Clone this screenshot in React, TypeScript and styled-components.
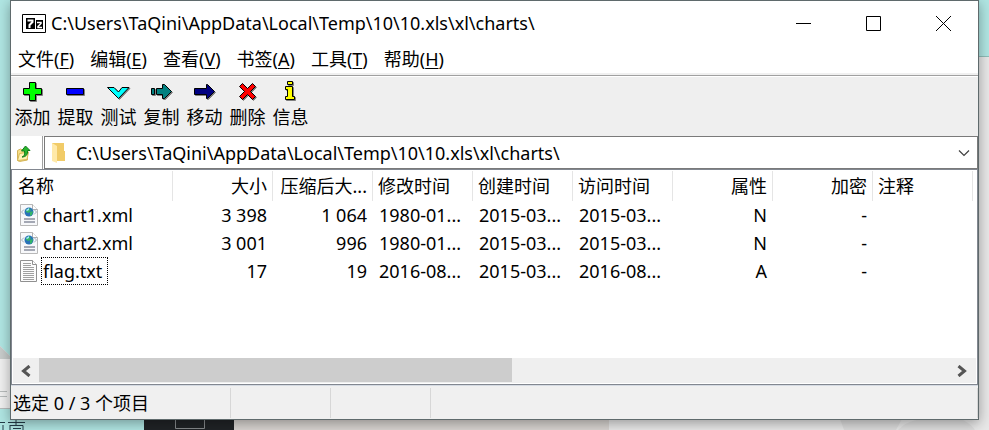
import React from "react";
import styled, { createGlobalStyle } from "styled-components";

const GlobalStyle = createGlobalStyle`
  *, *::before, *::after { box-sizing: border-box; }
  body {
    margin: 0;
    font-family: "Noto Sans", "Noto Sans CJK SC", sans-serif;
    font-size: 18px;
    line-height: 24px;
    color: #000;
    background: #a8dcd8;
  }
  button, input { font: inherit; color: inherit; margin: 0; padding: 0; border: 0; background: none; }
  svg { display: block; }
`;

const Desktop = styled.div`
  position: relative;
  display: flex;
  min-height: 100vh;
  padding: 0 10px 10px;
  overflow: hidden;
`;

const Wallpaper = styled.svg`
  position: absolute;
  inset: 0;
  width: 100%;
  height: 100%;
`;

const Window = styled.main`
  position: relative;
  display: flex;
  flex: 1;
  min-width: 0;
  flex-direction: column;
  border: 1px solid #5f6a6c;
  background: #fff;
  box-shadow: 0 3px 12px rgba(0, 0, 0, 0.35);
`;

const TitleBar = styled.header`
  display: flex;
  align-items: center;
  height: 44px;
  padding-left: 11px;
`;

const Title = styled.h1`
  flex: 1;
  min-width: 0;
  margin: 0 0 0 5px;
  overflow: hidden;
  font-size: 18px;
  font-weight: 400;
  white-space: nowrap;
`;

const CaptionButton = styled.button`
  display: grid;
  place-items: center;
  width: 70px;
  height: 44px;
`;

const MenuBar = styled.nav`
  display: flex;
  align-items: center;
  gap: 2px;
  height: 28px;
`;

const MenuItem = styled.button`
  padding: 0 7px;
  white-space: nowrap;
  u { text-underline-offset: 2px; text-decoration-thickness: 1px; }
`;

const Toolbar = styled.div`
  display: flex;
  height: 63px;
  padding-top: 5px;
  border-top: 2px solid #f0f0f0;
  background: #efefef;
  box-shadow: inset 0 1px #a0a0a0, inset 0 2px #fff;
`;

const ToolButton = styled.button`
  display: flex;
  flex-direction: column;
  align-items: center;
  gap: 1px;
  width: 43px;
  white-space: nowrap;
`;

const AddressRow = styled.div`
  display: flex;
  height: 33px;
`;

const UpButton = styled.button`
  display: flex;
  align-items: center;
  width: 32px;
  padding-left: 5px;
  border-right: 1px solid #a0a0a0;
`;

const AddressBox = styled.div`
  display: flex;
  flex: 1;
  align-items: center;
  min-width: 0;
  margin-left: 1px;
  padding-left: 6px;
  border: 1px solid #7a7a7a;
`;

const AddressInput = styled.input`
  flex: 1;
  min-width: 0;
  height: 28px;
  margin-left: 10px;
  outline: 0;
`;

const DropButton = styled.button`
  display: grid;
  place-items: center;
  width: 26px;
  height: 30px;
`;

const ListPanel = styled.section`
  display: flex;
  flex: 1;
  flex-direction: column;
  min-width: 0;
  padding: 1px;
  border: 1px solid #828790;
`;

const TableArea = styled.div`
  flex: 1;
  overflow: hidden;
`;

const FileTable = styled.table`
  width: 960px;
  table-layout: fixed;
  border-collapse: separate;
  border-spacing: 0;
`;

const Column = styled.col<{ $wide?: boolean }>`
  width: ${(p) => (p.$wide ? 160 : 100)}px;
`;

const HeadCell = styled.th<{ $right?: boolean }>`
  height: 30px;
  padding: 0 5px;
  border-right: 1px solid #e5e5e5;
  font-weight: 400;
  text-align: ${(p) => (p.$right ? "right" : "left")};
  white-space: nowrap;
`;

const Cell = styled.td<{ $right?: boolean }>`
  height: 28px;
  padding: 0 6px;
  text-align: ${(p) => (p.$right ? "right" : "left")};
  white-space: nowrap;
`;

const FileName = styled.div`
  display: flex;
  align-items: center;
  gap: 2px;
`;

const NameText = styled.span<{ $focused?: boolean }>`
  height: 28px;
  padding: 1px ${(p) => (p.$focused ? 5 : 1)}px 1px 1px;
  border: 1px dotted ${(p) => (p.$focused ? "#000" : "transparent")};
`;

const ScrollBar = styled.div`
  display: flex;
  height: 25px;
  padding-right: 1px;
  background: #efefef;
`;

const ScrollButton = styled.button`
  display: grid;
  place-items: center;
  width: 26px;
`;

const ScrollTrack = styled.div`
  flex: 1;
`;

const ScrollThumb = styled.div`
  width: 52%;
  height: 24px;
  background: #cdcdcd;
`;

const StatusBar = styled.footer`
  display: flex;
  height: 34px;
  padding: 2px 0 1px;
  border-top: 1px solid #d5dbe3;
  background: #f0f0f0;
`;

const StatusPart = styled.div<{ $width?: number }>`
  display: flex;
  flex: ${(p) => (p.$width ? `0 0 ${p.$width}px` : "1")};
  align-items: center;
  padding-left: 2px;
  border-right: 1px solid #d7d7d7;
  white-space: nowrap;
`;

function Shaded({ d, fill }: { d: string; fill: string }) {
  return (
    <svg width="25" height="24" viewBox="0 0 25 24" aria-hidden="true">
      <path d={d} fill="#808080" stroke="#808080" transform="translate(1 1)" />
      <path d={d} fill={fill} stroke="#000" />
    </svg>
  );
}

const tools = [
  { label: "添加", fill: "#00ff00", d: "M9.5 2.5h6v6h6v6h-6v6h-6v-6h-6v-6h6z" },
  { label: "提取", fill: "#0000ff", d: "M3.5 8.5h17v6h-17z" },
  { label: "测试", fill: "#00ffff", d: "M1.5 7.5h6.5l4.5 4.5 3.5-4.5h7L12.5 18.5z" },
  { label: "复制", fill: "#008080", d: "M2.5 8.5h3v6h-3zM7.5 8.5h6v-4h2l7 7-7 7h-2v-4h-6z" },
  { label: "移动", fill: "#000080", d: "M2.5 8.5h12v-4h1l7 7-7 7h-1v-4h-12z" },
  { label: "删除", fill: "#ff0000", d: "M7.5 3.5l5 5 5-5 3 3-5 5 5 5-3 3-5-5-5 5-3-3 5-5-5-5z" },
  { label: "信息", fill: "#ffff00", d: "M9.5 1.5h5v3h-5zM7.5 6.5h7v10h2v3h-9v-3h2v-7h-2z" },
];

const menus = [
  ["文件", "F"],
  ["编辑", "E"],
  ["查看", "V"],
  ["书签", "A"],
  ["工具", "T"],
  ["帮助", "H"],
];

const columns = [
  { title: "名称" },
  { title: "大小", right: true },
  { title: "压缩后大...", right: true },
  { title: "修改时间" },
  { title: "创建时间" },
  { title: "访问时间" },
  { title: "属性", right: true },
  { title: "加密", right: true },
  { title: "注释" },
];

const files = [
  ["chart1.xml", "3 398", "1 064", "1980-01...", "2015-03...", "2015-03...", "N", "-", ""],
  ["chart2.xml", "3 001", "996", "1980-01...", "2015-03...", "2015-03...", "N", "-", ""],
  ["flag.txt", "17", "19", "2016-08...", "2015-03...", "2016-08...", "A", "-", ""],
];

const path = "C:\\Users\\TaQini\\AppData\\Local\\Temp\\10\\10.xls\\xl\\charts\\";

function AppIcon() {
  return (
    <svg width="24" height="19" viewBox="0 0 24 19" aria-hidden="true">
      <path d="M.5.5h23v18H.5z" fill="#fff" stroke="#000" />
      <path d="M4 4h9v11H4zM14 6h7v9h-7z" fill="#000" />
      <path d="M5.5 6.5h5V8l-3 3v3" fill="none" stroke="#fff" strokeWidth="2" />
      <path d="M15 8.5h4v1l-3 3v1h4" fill="none" stroke="#fff" strokeWidth="1.5" />
    </svg>
  );
}

function XmlIcon() {
  return (
    <svg width="20" height="24" viewBox="0 0 20 24" aria-hidden="true">
      <path d="M1.5 1.5h12l5 5v16h-17z" fill="#f7f8fa" stroke="#b8b8b8" />
      <path d="M13.5 1.5v5h5" fill="#fff" stroke="#b0b0b0" />
      <path d="M5 6.5L2.5 9 5 11.5M15 6.5L17.5 9 15 11.5" fill="none" stroke="#9fb0c0" />
      <circle cx="10" cy="9" r="4.5" fill="#2872b8" />
      <path d="M7 7l3-2 2 2-2 3-3-1zM11 9l3-1-1 4-2 1z" fill="#35b567" />
      <path d="M7 7l3-2v2l-2 1z" fill="#a5e6ff" />
      <path d="M5 16h11M5 19h11" stroke="#a4a8b4" strokeWidth="2" />
    </svg>
  );
}

function TextIcon() {
  return (
    <svg width="20" height="24" viewBox="-1 0 20 24" aria-hidden="true">
      <path d="M.5 1.5h12l4 4v17H.5z" fill="#fcfcfc" stroke="#909090" />
      <path d="M12.5 1.5v4h4" fill="#fff" stroke="#909090" />
      <path
        d="M3 4.5h8M3 6.5h8M3 8.5h11M3 10.5h11M3 12.5h11M3 14.5h11M3 16.5h11M3 18.5h11M3 20.5h11"
        stroke="#a0a0a0"
      />
    </svg>
  );
}

function UpFolderIcon() {
  return (
    <svg width="17" height="18" viewBox="0 0 17 18" aria-hidden="true">
      <path d="M1.5 6.5l3-1.5 2 1 5 1v9l-8 1.5-2-1z" fill="#f8df86" stroke="#d3b45a" />
      <path d="M1.5 16.5l2-7 9-1.5-1.5 7.5z" fill="#fff3b4" stroke="#d8b855" />
      <path d="M6 13c2.500-.5 3-3 2.500-6H5.500L9.500 2l4.500 4.500h-2.500c.5 4-1.500 6.500-5.500 6.500z" fill="#28b52c" stroke="#117b19" />
    </svg>
  );
}

function FolderIcon() {
  return (
    <svg width="15" height="22" viewBox="0 0 15 22" aria-hidden="true">
      <path d="M1 1h12v8h1v10H2z" fill="#f1cb68" />
      <path d="M1 1l5 3v17l-5-2z" fill="#ffe9a9" />
    </svg>
  );
}

function Backdrop() {
  return (
    <Wallpaper viewBox="0 0 989 430" preserveAspectRatio="none" aria-hidden="true">
      <rect width="989" height="430" fill="#b0e6e3" />
      <path d="M0 346l11 11v51H0z" fill="#f0f0f0" />
      <path d="M0 346l11 11v2H0z" fill="#c8cccb" />
      <path d="M0 391.5h7M0 396.5h7M0 408.5h11" stroke="#b8bcbc" />
      <path d="M0 422.5h5M8 422.5h17M16 420v5M10 425.5h13v5M10 425v5M13 428.5h8M3 425v5" stroke="#243c48" fill="none" />
      <rect x="144" y="419" width="90" height="11" fill="#202326" />
      <path d="M175.5 419v9.500h29V419" fill="none" stroke="#85898b" />
      <rect x="234" y="419" width="375" height="11" fill="#d8d4d1" />
      <rect x="609" y="419" width="380" height="11" fill="#e8e8e8" />
      <rect x="978" y="57" width="11" height="373" fill="#e8e8e8" />
      <path d="M978 56.5h11" stroke="#8fbdb8" />
      <path d="M840 419h62l-6 11h-52z" fill="#dcdcdc" />
      <path d="M898 430q8-8 18-10h47q8 4 12 10z" fill="#dedede" />
    </Wallpaper>
  );
}

export default function App() {
  return (
    <>
      <GlobalStyle />
      <Desktop>
        <Backdrop />
        <Window>
          <TitleBar>
            <AppIcon />
            <Title>{path}</Title>
            <CaptionButton aria-label="最小化">
              <svg width="15" height="15" viewBox="0 0 15 15">
                <path d="M0 7.5h15" stroke="#000" />
              </svg>
            </CaptionButton>
            <CaptionButton aria-label="最大化">
              <svg width="15" height="15" viewBox="0 0 15 15">
                <path d="M.5.5h14v14H.5z" fill="none" stroke="#000" />
              </svg>
            </CaptionButton>
            <CaptionButton aria-label="关闭">
              <svg width="15" height="15" viewBox="0 0 15 15">
                <path d="M0 0l15 15M15 0L0 15" stroke="#000" />
              </svg>
            </CaptionButton>
          </TitleBar>
          <MenuBar>
            {menus.map(([name, key]) => (
              <MenuItem key={key}>
                {name}(<u>{key}</u>)
              </MenuItem>
            ))}
          </MenuBar>
          <Toolbar>
            {tools.map((tool) => (
              <ToolButton key={tool.label}>
                <Shaded d={tool.d} fill={tool.fill} />
                {tool.label}
              </ToolButton>
            ))}
          </Toolbar>
          <AddressRow>
            <UpButton aria-label="向上">
              <UpFolderIcon />
            </UpButton>
            <AddressBox>
              <FolderIcon />
              <AddressInput aria-label="路径" defaultValue={path} />
              <DropButton aria-label="展开">
                <svg width="12" height="8" viewBox="0 0 12 8">
                  <path d="M1 1.5l5 5 5-5" fill="none" stroke="#404040" strokeWidth="1.2" />
                </svg>
              </DropButton>
            </AddressBox>
          </AddressRow>
          <ListPanel>
            <TableArea>
              <FileTable>
                <colgroup>
                  {columns.map((c, i) => (
                    <Column key={c.title} $wide={i === 0} />
                  ))}
                </colgroup>
                <thead>
                  <tr>
                    {columns.map((c) => (
                      <HeadCell key={c.title} $right={c.right}>
                        {c.title}
                      </HeadCell>
                    ))}
                  </tr>
                </thead>
                <tbody>
                  {files.map((row, r) => (
                    <tr key={row[0]}>
                      {row.map((value, i) => (
                        <Cell key={columns[i].title} $right={columns[i].right}>
                          {i === 0 ? (
                            <FileName>
                              {r < 2 ? <XmlIcon /> : <TextIcon />}
                              <NameText $focused={r === 2}>{value}</NameText>
                            </FileName>
                          ) : (
                            value
                          )}
                        </Cell>
                      ))}
                    </tr>
                  ))}
                </tbody>
              </FileTable>
            </TableArea>
            <ScrollBar>
              <ScrollButton aria-label="向左滚动">
                <svg width="10" height="12" viewBox="0 0 10 12">
                  <path d="M8.5 1l-6 5 6 5" fill="none" stroke="#555" strokeWidth="3" />
                </svg>
              </ScrollButton>
              <ScrollTrack>
                <ScrollThumb />
              </ScrollTrack>
              <ScrollButton aria-label="向右滚动">
                <svg width="10" height="12" viewBox="0 0 10 12">
                  <path d="M1.5 1l6 5-6 5" fill="none" stroke="#555" strokeWidth="3" />
                </svg>
              </ScrollButton>
            </ScrollBar>
          </ListPanel>
          <StatusBar>
            <StatusPart $width={220}>选定 0 / 3 个项目</StatusPart>
            <StatusPart $width={100} />
            <StatusPart $width={100} />
            <StatusPart />
          </StatusBar>
        </Window>
      </Desktop>
    </>
  );
}
